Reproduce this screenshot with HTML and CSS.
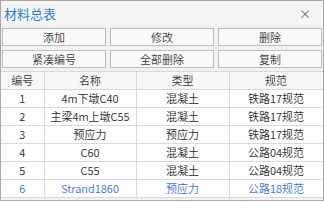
FILE: index.html
```html
<!DOCTYPE html>
<html lang="zh-CN">
<head>
    <meta charset="UTF-8">
    <title>材料总表</title>
    <link rel="stylesheet" href="styles.css">
</head>
<body>
    <div class="window">
        <div class="titlebar">
            <span class="title">材料总表</span>
            <span class="close">×</span>
        </div>

        <div class="actions">
            <button class="btn">添加</button>
            <button class="btn">修改</button>
            <button class="btn">删除</button>
            <button class="btn">紧凑编号</button>
            <button class="btn">全部删除</button>
            <button class="btn">复制</button>
        </div>

        <table class="grid">
            <colgroup>
                <col class="col-no">
                <col class="col-name">
                <col class="col-type">
                <col class="col-spec">
            </colgroup>
            <thead>
                <tr><th>编号</th><th>名称</th><th>类型</th><th>规范</th></tr>
            </thead>
            <tbody>
                <tr><td>1</td><td>4m下墩C40</td><td>混凝土</td><td>铁路17规范</td></tr>
                <tr><td>2</td><td>主梁4m上墩C55</td><td>混凝土</td><td>铁路17规范</td></tr>
                <tr><td>3</td><td>预应力</td><td>预应力</td><td>铁路17规范</td></tr>
                <tr><td>4</td><td>C60</td><td>混凝土</td><td>公路04规范</td></tr>
                <tr><td>5</td><td>C55</td><td>混凝土</td><td>公路04规范</td></tr>
                <tr class="current"><td>6</td><td>Strand1860</td><td>预应力</td><td>公路18规范</td></tr>
            </tbody>
        </table>
    </div>
</body>
</html>
```

FILE: styles.css
```css
body {
    margin: 0;
    font-family: "Noto Sans CJK SC", sans-serif;
    font-size: 11px;
    font-weight: 350;
    color: #2b2b2b;
    background: #ffffff;
}

.window {
    width: 324px;
    height: 201px;
    box-sizing: border-box;
    border: 1px solid #a8a8a8;
    background: #f2f2f2;
    overflow: hidden;
}

.titlebar {
    height: 24px;
    display: flex;
    align-items: center;
    justify-content: space-between;
    padding: 0 12px 0 3px;
    background: #f5f5f5;
}

.title {
    font-size: 13px;
    font-weight: 400;
    color: #2a7fd4;
}

.close {
    font-size: 12px;
    color: #555555;
}

.actions {
    display: grid;
    grid-template-columns: repeat(3, 1fr);
    gap: 4px;
    padding: 3px 1px 0 1px;
}

.btn {
    height: 18px;
    padding: 0;
    border: 1px solid #bdbdbd;
    background: #fafafa;
    color: #3a3a3a;
    font-family: inherit;
    font-size: 11px;
    font-weight: 350;
    line-height: 16px;
}

.grid {
    width: 322px;
    margin-top: 3px;
    border-collapse: collapse;
    table-layout: fixed;
    background: #ffffff;
}

.col-no { width: 43px; }
.col-name { width: 92px; }
.col-type { width: 93px; }
.col-spec { width: 94px; }

.grid th,
.grid td {
    height: 17px;
    padding: 0;
    border: 1px solid #d9d9d9;
    text-align: center;
    font-weight: 350;
    line-height: 17px;
    white-space: nowrap;
}

.grid th {
    background: #f7f7f7;
    color: #3a3a3a;
}

.grid tr > :first-child {
    border-left: none;
}

.grid tr.current td {
    color: #3b6fdc;
}
```
